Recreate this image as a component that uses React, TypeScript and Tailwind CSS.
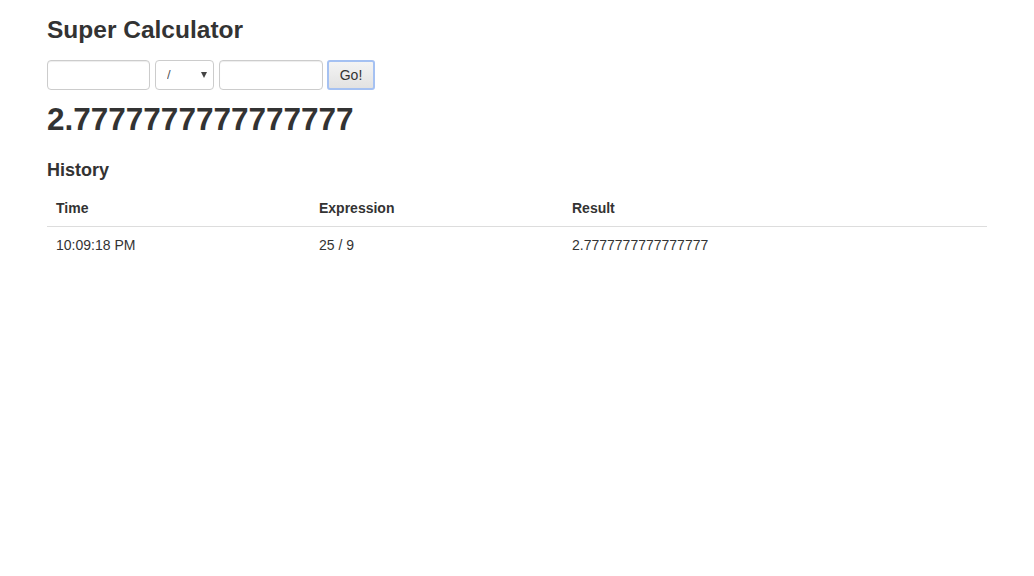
import { useState } from "react";

const HISTORY = [
  { time: "10:09:18 PM", expr: "25 / 9", result: "2.7777777777777777" },
];

export default function App() {
  const [op, setOp] = useState("/");

  return (
    <div className="min-h-screen bg-white text-[#333] font-['Liberation_Sans',Arial,sans-serif] text-[14px]">
      <div className="mx-auto w-[970px] px-[15px]">
        <h3 className="mt-[17px] text-[24.5px] font-bold leading-[26px]">
          Super Calculator
        </h3>

        <form className="mt-[17px] flex h-[30px] items-stretch">
          <input
            type="text"
            className="w-[103px] rounded-[4px] border border-[#ccc] bg-white px-2 shadow-[inset_0_1px_1px_rgba(0,0,0,0.075)] outline-none"
          />
          <div className="relative ml-[5px] w-[59px]">
            <select
              value={op}
              onChange={(e) => setOp(e.target.value)}
              className="h-full w-full appearance-none rounded-[4px] border border-[#ccc] bg-white pl-[11px] text-[13px] text-[#555] outline-none"
            >
              <option>+</option>
              <option>-</option>
              <option>*</option>
              <option>/</option>
            </select>
            <span className="pointer-events-none absolute right-[7px] top-[12px] h-0 w-0 border-x-[3.5px] border-t-[6px] border-x-transparent border-t-[#444]" />
          </div>
          <input
            type="text"
            className="ml-[5px] w-[104px] rounded-[4px] border border-[#ccc] bg-white px-2 shadow-[inset_0_1px_1px_rgba(0,0,0,0.075)] outline-none"
          />
          <button
            type="button"
            className="ml-[4px] w-[48px] rounded-[3px] border-2 border-[#a5c1f2] bg-gradient-to-b from-[#f4f4f4] to-[#e2e2e2] text-[14px] text-[#333]"
          >
            Go!
          </button>
        </form>

        <h1 className="mt-[11px] text-[31.5px] font-bold leading-[36px]">
          2.7777777777777777
        </h1>

        <h4 className="mt-[23px] text-[18px] font-bold leading-[20px]">
          History
        </h4>

        <table className="mt-[10px] w-[940px] border-collapse">
          <thead>
            <tr className="border-b border-[#ddd]">
              <th className="w-[264px] px-[9px] py-[8px] text-left text-[14px] font-bold leading-[20px]">
                Time
              </th>
              <th className="w-[253px] px-[8px] py-[8px] text-left text-[14px] font-bold leading-[20px]">
                Expression
              </th>
              <th className="px-[8px] py-[8px] text-left text-[14px] font-bold leading-[20px]">
                Result
              </th>
            </tr>
          </thead>
          <tbody>
            {HISTORY.map((row) => (
              <tr key={row.time}>
                <td className="px-[9px] py-[8px] leading-[20px]">{row.time}</td>
                <td className="px-[8px] py-[8px] leading-[20px]">{row.expr}</td>
                <td className="px-[8px] py-[8px] leading-[20px]">{row.result}</td>
              </tr>
            ))}
          </tbody>
        </table>
      </div>
    </div>
  );
}
